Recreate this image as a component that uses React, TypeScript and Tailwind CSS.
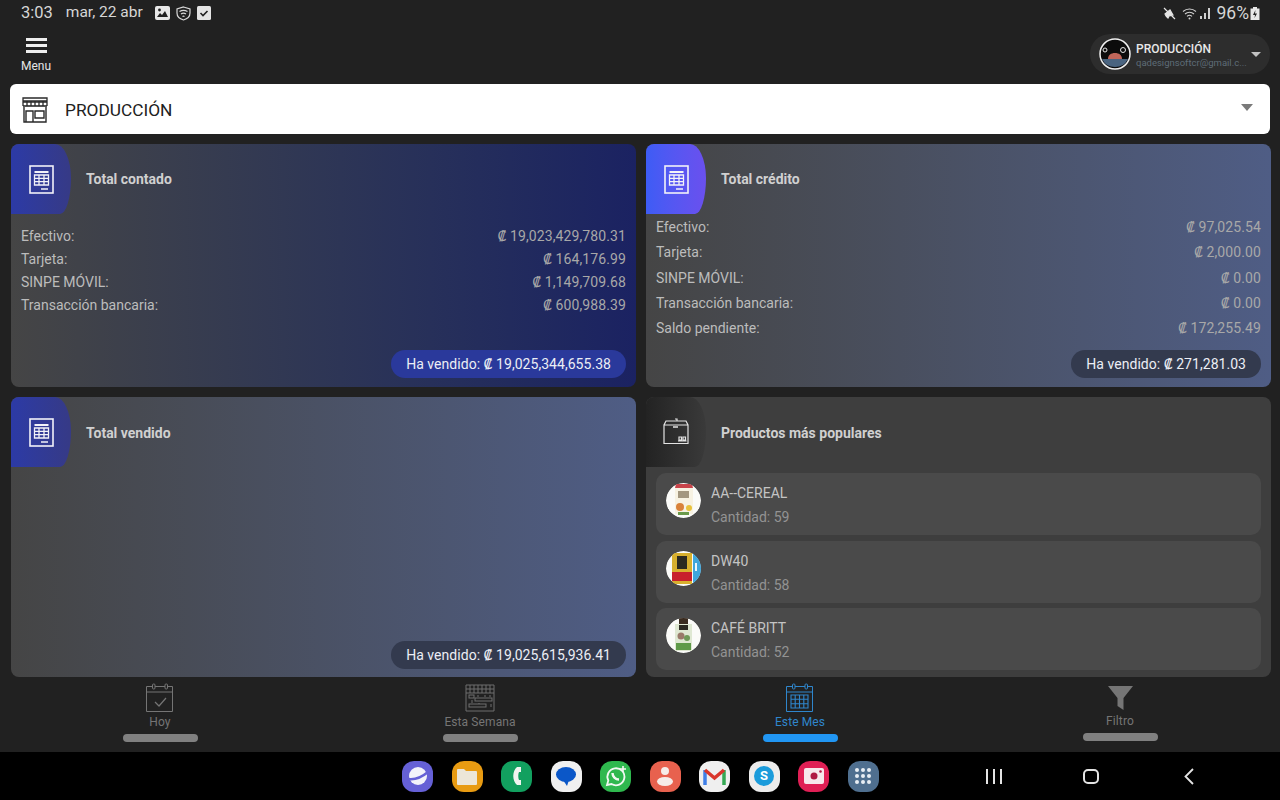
import type { ReactNode } from 'react';

const FONT = 'font-[Roboto,"DejaVu_Sans",sans-serif]';

function LedgerIcon() {
  return (
    <svg width="25" height="29" viewBox="0 0 25 29" fill="none" stroke="#f2f2f8" strokeWidth="1.3">
      <rect x="1" y="1" width="23" height="27" strokeWidth="1.6" />
      <rect x="5.5" y="6" width="14" height="2" fill="#f2f2f8" stroke="none" />
      <path d="M5.5 10h14v10h-14zM5.5 13.3h14M5.5 16.6h14M10 10v10M15 10v10" />
      <path d="M12 24h7" strokeWidth="1.6" />
    </svg>
  );
}

function BoxIcon() {
  return (
    <svg width="28" height="28" viewBox="0 0 28 28" fill="none" stroke="#e4e4e4" strokeWidth="1.2">
      <path d="M4 3h20l2 4v18.5H2V7zM2 7h24M13 1h2v2" />
      <path d="M11 9h5" strokeWidth="1.5" />
      <path d="M17 19h2.5v3H17zM21 19h2.5v3H21zM16 23h8.5" />
    </svg>
  );
}

function CardShell({
  bg,
  blob,
  icon,
  title,
  titleClass = '',
  children,
}: {
  bg: string;
  blob: string;
  icon: ReactNode;
  title: string;
  titleClass?: string;
  children: ReactNode;
}) {
  return (
    <div className={`flex min-h-0 flex-col overflow-hidden rounded-[8px] ${bg}`}>
      <div className="flex h-[70px] shrink-0 items-center">
        <div
          className={`flex h-[70px] w-[60px] shrink-0 items-center justify-center rounded-[0_16px_11px_0/0_34px_36px_0] ${blob}`}
        >
          {icon}
        </div>
        <span className={`ml-[15px] text-[14px] font-bold text-[#d0d0d0] ${titleClass}`}>{title}</span>
      </div>
      {children}
    </div>
  );
}

function Rows({ rows, rowClass }: { rows: [string, string][]; rowClass: string }) {
  return (
    <div className="flex flex-col px-[10px] text-[14px] text-[#bcbcbc]">
      {rows.map(([label, value]) => (
        <div key={label} className={`flex items-center justify-between ${rowClass}`}>
          <span>{label}</span>
          <span className="tracking-[0.1px] text-[#a8a8a8]">₡ {value}</span>
        </div>
      ))}
    </div>
  );
}

function Sold({ amount, bg, pad }: { amount: string; bg: string; pad: string }) {
  return (
    <div className={`mt-auto flex justify-end pr-[10px] ${pad}`}>
      <span className={`flex h-[28px] items-center rounded-full px-[15px] text-[14px] tracking-[0.04px] text-[#eceef5] ${bg}`}>
        Ha vendido: ₡ {amount}
      </span>
    </div>
  );
}

function ProductThumb({ kind }: { kind: 'cereal' | 'dw' | 'cafe' }) {
  return (
    <svg width="35" height="35" viewBox="0 0 35 35" className="shrink-0 rounded-full">
      <circle cx="17.5" cy="17.5" r="17.5" fill="#fbfbf8" />
      <g className="blur-[0.5px]">
        {kind === 'cereal' && (
          <g>
            <path d="M10 1h16l1 4H9z" fill="#c8444a" />
            <rect x="9" y="5" width="18" height="26" fill="#f7f2e2" />
            <rect x="12" y="8" width="11" height="7" fill="#6a5a40" opacity="0.6" />
            <circle cx="14" cy="24" r="4" fill="#d9823a" />
            <circle cx="23" cy="25" r="3" fill="#e8c23c" />
            <rect x="12" y="29" width="11" height="3" fill="#6a9a4a" />
          </g>
        )}
        {kind === 'dw' && (
          <g>
            <rect x="6" y="2" width="20" height="31" fill="#d8b02e" />
            <rect x="11" y="5" width="10" height="13" fill="#2c2a20" />
            <rect x="6" y="21" width="20" height="9" fill="#c8202c" />
            <rect x="27" y="0" width="8" height="35" fill="#3fa6dc" />
            <rect x="29" y="12" width="2" height="8" fill="#e8f4fb" />
          </g>
        )}
        {kind === 'cafe' && (
          <g>
            <rect x="13" y="0" width="9" height="7" fill="#3a2c20" />
            <rect x="9" y="6" width="17" height="27" fill="#dfe8d2" />
            <rect x="13" y="7" width="9" height="5" fill="#2c2a22" />
            <circle cx="15" cy="18" r="3.5" fill="#9a7a6a" />
            <circle cx="21" cy="20" r="3" fill="#6f9a58" />
            <rect x="10" y="25" width="15" height="7" fill="#5f9a48" />
          </g>
        )}
      </g>
    </svg>
  );
}

function ProductRow({ name, qty, kind }: { name: string; qty: number; kind: 'cereal' | 'dw' | 'cafe' }) {
  return (
    <div className="flex h-[62px] items-start rounded-[10px] bg-[#4a4a4a] pt-[10px] pl-[10px]">
      <ProductThumb kind={kind} />
      <div className="ml-[10px] flex flex-col text-[14px] leading-[20px]">
        <span className="text-[#c4c4c4]">{name}</span>
        <span className="mt-[4px] text-[#939393]">Cantidad: {qty}</span>
      </div>
    </div>
  );
}

function CalendarBase({ color, children }: { color: string; children: ReactNode }) {
  return (
    <svg width="30" height="30" viewBox="0 0 30 30" fill="none" stroke={color} strokeWidth="1">
      <path d="M1.5 3.5h26v25h-26z" />
      <path d="M1.5 9h26" />
      <rect x="7.5" y="1" width="2.5" height="5" rx="1" fill="#212121" />
      <rect x="20" y="1" width="2.5" height="5" rx="1" fill="#212121" />
      {children}
    </svg>
  );
}

function NavItem({
  icon,
  label,
  active,
  labelClass = 'mt-[1px]',
}: {
  icon: ReactNode;
  label: string;
  active?: boolean;
  labelClass?: string;
}) {
  return (
    <div className="flex flex-col items-center pt-[5px]">
      <div className="flex h-[30px] items-center justify-center">{icon}</div>
      <span className={`text-[12px] leading-[16px] tracking-[0.1px] ${labelClass} ${active ? 'text-[#2f86cc]' : 'text-[#757575]'}`}>
        {label}
      </span>
      <div className={`mt-[4px] h-[8px] w-[75px] rounded-full ${active ? 'bg-[#2196f3]' : 'bg-[#808080]'}`} />
    </div>
  );
}

function DockIcon({ bg, children }: { bg: string; children: ReactNode }) {
  return (
    <div className={`flex h-[31px] w-[31px] shrink-0 items-center justify-center overflow-hidden rounded-[12px] ${bg}`}>
      {children}
    </div>
  );
}

export default function App() {
  return (
    <div className={`flex h-[800px] w-[1280px] flex-col overflow-hidden bg-[#212121] ${FONT}`}>
      {/* Status bar */}
      <div className="flex h-[26px] shrink-0 items-center justify-between pr-[20px] pl-[21px] text-[#d6d6d6]">
        <div className="flex items-center">
          <span className="text-[16.5px]">3:03</span>
          <span className="ml-[13px] text-[15.5px]">mar, 22 abr</span>
          <svg width="15" height="14" viewBox="0 0 15 14" className="ml-[12px]">
            <rect width="15" height="14" rx="2" fill="#e8e8e8" />
            <path d="M2 11l3-4 2 2 3-4 3 6z" fill="#212121" />
            <circle cx="4.5" cy="4" r="1.4" fill="#212121" />
          </svg>
          <svg width="15" height="15" viewBox="0 0 15 15" fill="none" stroke="#d8d8d8" strokeWidth="1.2" className="ml-[6px]">
            <path d="M7.5 1L14 3v4c0 3.5-3 6-6.5 7C4 13 1 10.500 1 7V3z" />
            <path d="M3.500 5.500c2.500-1.500 5.500-1.500 8 0M5 8c1.600-1 3.400-1 5 0M6.500 10.500c.6-.4 1.400-.4 2 0" />
          </svg>
          <svg width="14" height="14" viewBox="0 0 14 14" className="ml-[6px]">
            <rect width="14" height="14" rx="1.500" fill="#e4e4e4" />
            <path d="M3.500 7l2.500 2.500 4.500-4.500" fill="none" stroke="#212121" strokeWidth="1.600" />
          </svg>
        </div>
        <div className="flex items-center">
          <svg width="13" height="13" viewBox="0 0 13 13" fill="#e4e4e4">
            <path d="M2 7l5-4 3 5-4 1-1 2-1-1-1-1zM1 1l11 11" stroke="#e4e4e4" strokeWidth="1.200" />
          </svg>
          <svg width="15" height="13" viewBox="0 0 15 13" fill="none" stroke="#d0d0d0" strokeWidth="1.100" className="ml-[6px]">
            <path d="M1 4.500c3.800-3.400 9.200-3.400 13 0M3 7c2.600-2.400 6.400-2.400 9 0M5 9.300c1.500-1.300 3.500-1.300 5 0" />
            <circle cx="7.500" cy="11.500" r="1" fill="#d0d0d0" stroke="none" />
          </svg>
          <svg width="11" height="13" viewBox="0 0 11 13" fill="#d0d0d0" className="ml-[3px]">
            <rect x="0" y="9" width="2" height="3" />
            <rect x="4" y="6" width="2" height="6" />
            <rect x="8" y="1" width="2" height="11" />
          </svg>
          <span className="ml-[6px] text-[17.500px]">96%</span>
          <svg width="10" height="13" viewBox="0 0 10 13" className="ml-[1px]">
            <path d="M3 0h4v1.500h2.500V13H.5V1.500H3z" fill="#e8e8e8" />
            <path d="M5.500 3L3 8h2l-.5 3L7 6.500H5z" fill="#212121" />
          </svg>
        </div>
      </div>

      {/* App bar */}
      <div className="flex h-[58px] shrink-0 items-start justify-between pr-[10px] pl-[21px]">
        <div className="flex w-[30px] flex-col items-center pt-[12px]">
          <div className="flex w-[21px] flex-col gap-[3.500px]">
            <div className="h-[2.500px] bg-[#eeeeee]" />
            <div className="h-[2.500px] bg-[#eeeeee]" />
            <div className="h-[2.500px] bg-[#eeeeee]" />
          </div>
          <span className="mt-[5px] text-[12px] leading-[16px] text-[#e6e6e6]">Menu</span>
        </div>
        <div className="mt-[8px] flex h-[40px] w-[180px] items-center rounded-[20px] bg-[#2d2d2d] pr-[9px] pl-[9px]">
          <svg width="32" height="32" viewBox="0 0 32 32" className="shrink-0">
            <circle cx="16" cy="16" r="15" fill="#0c0c0c" stroke="#f0f0f0" strokeWidth="1.500" />
            <path d="M3 21h26a14.500 14.500 0 0 1-26 0z" fill="#4a6480" />
            <path d="M9 21c0-4 3-6 7-6s7 2 7 6z" fill="#c0665a" />
            <circle cx="6" cy="12" r="2" fill="none" stroke="#e8e8e8" />
            <circle cx="24" cy="12" r="2.500" fill="none" stroke="#e8e8e8" />
          </svg>
          <div className="mt-[3px] ml-[5px] flex min-w-0 flex-1 flex-col">
            <span className="text-[12px] leading-[14px] font-medium text-[#e8e8e8]">PRODUCCIÓN</span>
            <span className="whitespace-nowrap text-[9.500px] leading-[14px] text-[#5e6c77]">qadesignsoftcr@gmail.c...</span>
          </div>
          <div className="mt-[1px] h-0 w-0 border-x-[5px] border-t-[5px] border-x-transparent border-t-[#c2c2c2]" />
        </div>
      </div>

      {/* Store select */}
      <div className="mx-[10px] flex h-[50px] shrink-0 items-center rounded-[6px] bg-white pr-[17px] pl-[12px]">
        <svg width="26" height="26" viewBox="0 0 26 26" fill="none" stroke="#2a2a2a" strokeWidth="1.300" className="mt-[2px]">
          <path d="M1 1h24v3H1zM1 4v5M25 4v5" />
          <path d="M1 5h24M5 4v5M9 4v5M13 4v5M17 4v5M21 4v5" />
          <path d="M1 9h24" strokeWidth="1.600" />
          <path d="M2 10v15h22V10" strokeWidth="1.400" />
          <path d="M4 25V14h7v11M13 14h9v7h-9z" strokeWidth="1.400" />
        </svg>
        <span className="mt-[4px] ml-[17px] flex-1 text-[17.300px] text-[#212121]">PRODUCCIÓN</span>
        <div className="mb-[4px] h-0 w-0 border-x-[6px] border-t-[7px] border-x-transparent border-t-[#7a7a7a]" />
      </div>

      {/* Cards */}
      <div className="mt-[10px] grid min-h-0 flex-1 grid-cols-2 grid-rows-[243px_280px] gap-x-[10px] gap-y-[10px] pr-[9px] pl-[11px]">
        <CardShell
          bg="bg-gradient-to-r from-[#454545] to-[#1b2262]"
          blob="bg-gradient-to-r from-[#2c3aa6] to-[#363a86]"
          icon={<LedgerIcon />}
          title="Total contado"
        >
          <div className="mt-[11px]">
            <Rows
              rowClass="h-[23px]"
              rows={[
                ['Efectivo:', '19,023,429,780.31'],
                ['Tarjeta:', '164,176.99'],
                ['SINPE MÓVIL:', '1,149,709.68'],
                ['Transacción bancaria:', '600,988.39'],
              ]}
            />
          </div>
          <Sold amount="19,025,344,655.38" bg="bg-[#2a399b]" pad="pb-[9px]" />
        </CardShell>

        <CardShell
          bg="bg-gradient-to-r from-[#454545] to-[#4f5d85]"
          blob="bg-gradient-to-r from-[#3d5cf5] to-[#6a50ee]"
          icon={<LedgerIcon />}
          title="Total crédito"
        >
          <div className="mt-[1px]">
            <Rows
              rowClass="h-[25.300px]"
              rows={[
                ['Efectivo:', '97,025.54'],
                ['Tarjeta:', '2,000.00'],
                ['SINPE MÓVIL:', '0.00'],
                ['Transacción bancaria:', '0.00'],
                ['Saldo pendiente:', '172,255.49'],
              ]}
            />
          </div>
          <Sold amount="271,281.03" bg="bg-[#333a4e]" pad="pb-[9px]" />
        </CardShell>

        <CardShell
          bg="bg-gradient-to-r from-[#454545] to-[#4f5d85]"
          blob="bg-gradient-to-r from-[#2c3aa6] to-[#363a86]"
          icon={<LedgerIcon />}
          title="Total vendido"
          titleClass="mt-[2px]"
        >
          <Sold amount="19,025,615,936.41" bg="bg-[#333a4e]" pad="pb-[8px]" />
        </CardShell>

        <CardShell
          bg="bg-[#3e3e3e]"
          blob="bg-gradient-to-r from-[#232323] to-[#3a3a3a]"
          icon={<BoxIcon />}
          title="Productos más populares"
          titleClass="mt-[2px]"
        >
          <div className="mt-[6px] flex flex-col gap-[5.500px] px-[10px]">
            <ProductRow name="AA--CEREAL" qty={59} kind="cereal" />
            <ProductRow name="DW40" qty={58} kind="dw" />
            <ProductRow name="CAFÉ BRITT" qty={52} kind="cafe" />
          </div>
        </CardShell>
      </div>

      {/* Bottom tabs */}
      <div className="grid h-[74px] shrink-0 grid-cols-4">
        <NavItem
          label="Hoy"
          icon={
            <CalendarBase color="#757575">
              <path d="M10 19l4 4 7-8" strokeWidth="1.200" />
            </CalendarBase>
          }
        />
        <NavItem
          label="Esta Semana"
          icon={
            <svg width="30" height="28" viewBox="0 0 30 28" fill="none" stroke="#6f6f6f" strokeWidth="1">
              <path d="M1 1h28v26H1zM1 5h28M1 9h28M5 1v8M9 1v8M13 1v8M17 1v8M21 1v8M25 1v8" />
              <rect x="4" y="11" width="5" height="3" />
              <rect x="10" y="14" width="17" height="3" />
              <rect x="4" y="20" width="17" height="3" />
              <path d="M13 11v2M20 11v2M25 11v2M7 16v3M14 19v1M26 20v3" />
            </svg>
          }
        />
        <NavItem
          active
          label="Este Mes"
          icon={
            <CalendarBase color="#2f86cc">
              <path d="M6 12h17v13H6zM6 16.300h17M6 20.700h17M10.200 12v13M14.500 12v13M18.800 12v13" strokeWidth="1.100" />
            </CalendarBase>
          }
        />
        <NavItem
          label="Filtro"
          labelClass="mt-0"
          icon={
            <svg width="25" height="26" viewBox="0 0 25 26" fill="#757575">
              <path d="M0 1h25L15.500 13v12l-6-4v-8z" />
            </svg>
          }
        />
      </div>

      {/* Android nav */}
      <div className="flex h-[48px] shrink-0 items-center bg-black pl-[402px]">
        <div className="flex items-center gap-[18.500px]">
          <DockIcon bg="bg-[#6560d6]">
            <svg width="22" height="22" viewBox="0 0 22 22">
              <circle cx="11" cy="11" r="9" fill="#f2f2fa" />
              <path d="M1 14c6 1 14-2 20-7" stroke="#6560d6" strokeWidth="2.500" fill="none" />
            </svg>
          </DockIcon>
          <DockIcon bg="bg-[#e89b12]">
            <svg width="20" height="17" viewBox="0 0 20 17">
              <path d="M0 2a1 1 0 0 1 1-1h6l2 2h10a1 1 0 0 1 1 1v12a1 1 0 0 1-1 1H1a1 1 0 0 1-1-1z" fill="#ece6d8" />
            </svg>
          </DockIcon>
          <DockIcon bg="bg-[#12a05f]">
            <svg width="14" height="20" viewBox="0 0 14 20">
              <path d="M7 1h4v5H9c-1 2-1 6 0 8h2v5H7C2 15 2 5 7 1z" fill="#f0f4f0" />
            </svg>
          </DockIcon>
          <DockIcon bg="bg-[#f0f0f0]">
            <svg width="22" height="22" viewBox="0 0 22 22">
              <ellipse cx="11" cy="9.500" rx="10" ry="7.500" fill="#0b57c8" />
              <path d="M8 15l4 6 2-6z" fill="#0b57c8" />
            </svg>
          </DockIcon>
          <DockIcon bg="bg-[#2fb84e]">
            <svg width="23" height="23" viewBox="0 0 23 23" fill="none" stroke="#f2f8f2" strokeWidth="1.800">
              <path d="M3 20l1.300-4.500A8.500 8.500 0 1 1 7.500 19z" />
              <path d="M8.500 8c0 3.500 3 6.500 6.500 6.500" strokeWidth="2.500" />
              <path d="M19 1v6M16 4h6" strokeWidth="1.600" />
            </svg>
          </DockIcon>
          <DockIcon bg="bg-[#e8614e]">
            <svg width="20" height="22" viewBox="0 0 20 22" fill="#f6ece8">
              <circle cx="10" cy="6" r="4" />
              <ellipse cx="10" cy="16.500" rx="8" ry="4.500" />
            </svg>
          </DockIcon>
          <DockIcon bg="bg-[#efefef]">
            <svg width="23" height="18" viewBox="0 0 23 18" fill="none" strokeWidth="3.500">
              <path d="M2 18V3" stroke="#3f7fe8" />
              <path d="M21 18V3" stroke="#35a853" />
              <path d="M2 3l9.500 8L21 3" stroke="#d9362c" />
            </svg>
          </DockIcon>
          <DockIcon bg="bg-[#ececec]">
            <div className="flex h-[20px] w-[20px] items-center justify-center rounded-full bg-[#1a9bdb] text-[13px] font-bold text-white">
              S
            </div>
          </DockIcon>
          <DockIcon bg="bg-[#e01f55]">
            <svg width="20" height="16" viewBox="0 0 20 16">
              <rect width="20" height="16" rx="2" fill="#f7e8ec" />
              <circle cx="10" cy="8" r="3.500" fill="#b01a44" />
              <circle cx="16.500" cy="3.500" r="1.300" fill="#b01a44" />
            </svg>
          </DockIcon>
          <DockIcon bg="bg-[#4f6f8f]">
            <div className="grid grid-cols-3 gap-[2.500px]">
              {Array.from({ length: 9 }).map((_, i) => (
                <div key={i} className="h-[3.500px] w-[3.500px] rounded-full bg-[#e8eef4]" />
              ))}
            </div>
          </DockIcon>
        </div>
        <div className="ml-[107.500px] flex gap-[5px]">
          <div className="h-[15px] w-[2px] bg-[#e4e4e4]" />
          <div className="h-[15px] w-[2px] bg-[#e4e4e4]" />
          <div className="h-[15px] w-[2px] bg-[#e4e4e4]" />
        </div>
        <div className="ml-[81px] h-[15px] w-[16px] rounded-[5px] border-2 border-[#e4e4e4]" />
        <svg width="10" height="17" viewBox="0 0 10 17" fill="none" stroke="#e4e4e4" strokeWidth="1.800" className="ml-[85px]">
          <path d="M9 1L1.500 8.500 9 16" />
        </svg>
      </div>
    </div>
  );
}
